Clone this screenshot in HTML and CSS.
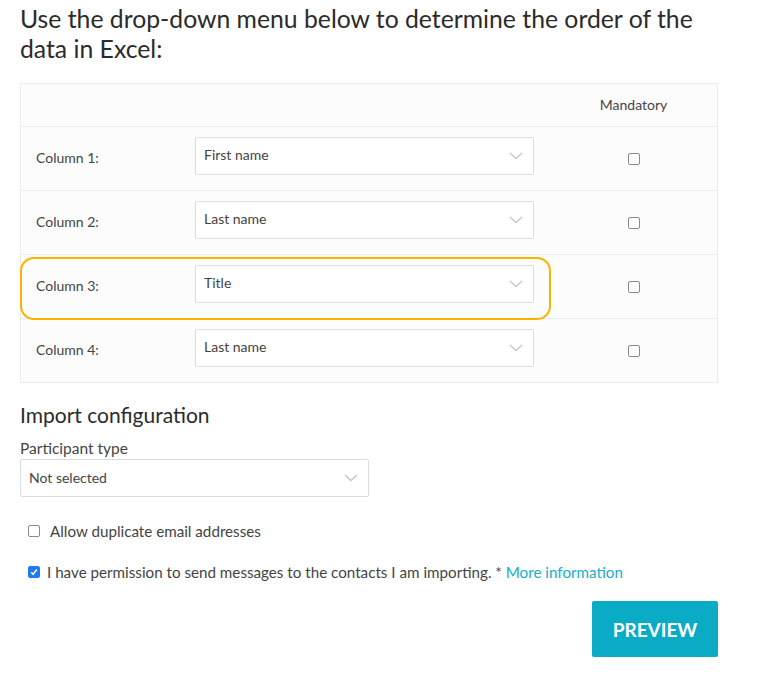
FILE: index.html
```html
<!DOCTYPE html>
<html>
<head>
<meta charset="utf-8">
<link rel="stylesheet" href="styles.css">
</head>
<body>
<div class="page">
  <h1 class="title">Use the drop-down menu below to determine the order of the data in Excel:</h1>
  <div class="map">
    <div class="row head">
      <div class="cell"></div>
      <div class="cell"></div>
      <div class="cell center">Mandatory</div>
    </div>
    <div class="row">
      <div class="cell label">Column 1:</div>
      <div class="cell"><div class="select"><span>First name</span><svg class="chev" width="14" height="8" viewBox="0 0 14 8"><path d="M1 1l6 5.5L13 1" fill="none" stroke="#c8c8c8" stroke-width="1.6"/></svg></div></div>
      <div class="cell center"><span class="cb"></span></div>
    </div>
    <div class="row">
      <div class="cell label">Column 2:</div>
      <div class="cell"><div class="select"><span>Last name</span><svg class="chev" width="14" height="8" viewBox="0 0 14 8"><path d="M1 1l6 5.5L13 1" fill="none" stroke="#c8c8c8" stroke-width="1.6"/></svg></div></div>
      <div class="cell center"><span class="cb"></span></div>
    </div>
    <div class="row">
      <div class="cell label">Column 3:</div>
      <div class="cell"><div class="select"><span>Title</span><svg class="chev" width="14" height="8" viewBox="0 0 14 8"><path d="M1 1l6 5.5L13 1" fill="none" stroke="#c8c8c8" stroke-width="1.6"/></svg></div></div>
      <div class="cell center"><span class="cb"></span></div>
    </div>
    <div class="row">
      <div class="cell label">Column 4:</div>
      <div class="cell"><div class="select"><span>Last name</span><svg class="chev" width="14" height="8" viewBox="0 0 14 8"><path d="M1 1l6 5.5L13 1" fill="none" stroke="#c8c8c8" stroke-width="1.6"/></svg></div></div>
      <div class="cell center"><span class="cb"></span></div>
    </div>
    <div class="highlight"></div>
  </div>

  <h2 class="sub">Import configuration</h2>
  <div class="field-label">Participant type</div>
  <div class="select wide"><span>Not selected</span><svg class="chev" width="14" height="8" viewBox="0 0 14 8"><path d="M1 1l6 5.5L13 1" fill="none" stroke="#c8c8c8" stroke-width="1.6"/></svg></div>

  <div class="check-line dup"><span class="cb"></span><span>Allow duplicate email addresses</span></div>
  <div class="check-line perm"><span class="cb checked"><svg width="8" height="8" viewBox="0 0 8 8"><path d="M1.2 4.3l1.9 2L6.9 1.5" fill="none" stroke="#fff" stroke-width="1.5"/></svg></span><span>I have permission to send messages to the contacts I am importing. * <a class="link" href="#">More information</a></span></div>

  <div class="actions"><button class="btn">PREVIEW</button></div>
</div>
</body>
</html>
```
FILE: styles.css
```css
* { box-sizing: border-box; }
html, body { margin: 0; padding: 0; background: #fff; }
body { font-family: Lato, "Open Sans", sans-serif; color: #333; }
.page { padding: 0 65px 0 20px; width: 783px; }
.title { font-weight: 400; font-size: 24.75px; line-height: 30px; margin: 4px 0 0; color: #2b2b2b; width: 720px; }
.map { position: relative; margin-top: 19px; width: 698px; border: 1px solid #ececec; background: #fcfcfc; }
.row { display: grid; grid-template-columns: 158px 371px 167px; height: 64px; border-top: 1px solid #ececec; }
.row.head { height: 42px; border-top: none; }
.head .cell { padding-top: 0; margin-top: -2px; }
.cell { display: flex; align-items: center; padding: 0 16px; font-size: 14px; color: #444; }
.cell.center { justify-content: center; }
.label { padding-left: 15px; margin-top: -2px; }
.select { width: 100%; height: 38px; border: 1px solid #dcdcdc; border-radius: 2px; background: #fff; display: flex; align-items: center; justify-content: space-between; padding: 0 10px 2px 8px; font-size: 14px; color: #444; margin-top: -6px; }
.chev { margin-top: 2px; }
.cb { display: inline-block; width: 12px; height: 12px; border: 1px solid #8a8a8a; border-radius: 2px; background: #fff; margin-top: 1px; }
.cb.checked { background: #1f7cf0; border-color: #1f7cf0; display: inline-flex; align-items: center; justify-content: center; }
.highlight { position: absolute; left: -1px; top: 173px; width: 531px; height: 63px; border: 2.5px solid #f7b500; border-radius: 14px; pointer-events: none; }
.sub { font-weight: 400; font-size: 21px; margin: 19px 0 0; line-height: 26px; color: #2b2b2b; }
.field-label { font-size: 15.5px; color: #444; margin-top: 10px; line-height: 20px; }
.select.wide { width: 349px; margin-top: 1px; height: 38px; }
.check-line { display: flex; align-items: center; font-size: 15.2px; color: #444; padding-left: 8px; line-height: 20px; }
.check-line .cb { margin-top: 0; flex: none; }
.dup { margin-top: 24px; gap: 10px; }
.perm { margin-top: 21px; gap: 7px; }
.link { color: #17aecb; text-decoration: none; }
.actions { display: flex; justify-content: flex-end; width: 698px; margin-top: 19px; }
.btn { width: 126px; height: 56px; background: #0aacc5; color: #fff; border: none; border-radius: 2px; font-family: Lato, sans-serif; font-weight: 700; font-size: 19px; box-shadow: 0 2px 3px rgba(0,0,0,0.12); }
```
